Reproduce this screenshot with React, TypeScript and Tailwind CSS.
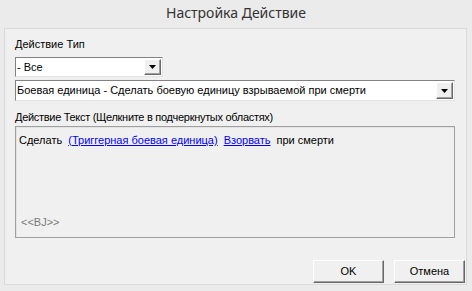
import React from "react";

function Arrow() {
  return (
    <svg width="7" height="4" viewBox="0 0 7 4">
      <path d="M0 0H7L3.5 4Z" fill="#000" />
    </svg>
  );
}

function Combo({ text, className }: { text: string; className: string }) {
  return (
    <div
      className={`flex bg-white border border-t-[#828282] border-l-[#828282] border-r-[#e3e3e3] border-b-[#e3e3e3] ${className}`}
    >
      <div className="flex-1 flex items-center pl-[1px] text-[11px] leading-none text-black overflow-hidden whitespace-nowrap">
        {text}
      </div>
      <div className="w-[17px] m-[1px] flex items-center justify-center bg-[#f0f0f0] border border-t-white border-l-white border-r-[#696969] border-b-[#696969] shadow-[inset_-1px_-1px_0_#a0a0a0]">
        <Arrow />
      </div>
    </div>
  );
}

function Btn({ label }: { label: string }) {
  return (
    <div className="w-[71px] h-[23px] flex items-center justify-center bg-[#f0f0f0] border border-t-white border-l-white border-r-[#696969] border-b-[#696969] shadow-[inset_-1px_-1px_0_#a0a0a0] text-[11px] text-black">
      {label}
    </div>
  );
}

export default function App() {
  return (
    <div
      className="w-[472px] h-[291px] bg-[#ebebeb] flex flex-col"
      style={{ fontFamily: '"Liberation Sans", Arial, sans-serif' }}
    >
      <div
        className="h-[28px] flex items-center justify-center text-[14px] text-[#333] pb-[3px]"
        style={{ fontFamily: '"Noto Sans", "Open Sans", sans-serif' }}
      >
        Настройка Действие
      </div>
      <div className="ml-[4px] w-[463px] h-[257px] bg-[#f0f0f0] border border-[#dadada] flex flex-col pl-[10px] text-[11px] text-black">
        <div className="mt-[9px] h-[13px] leading-[13px]">Действие Тип</div>
        <Combo text="- Все" className="mt-[6px] w-[148px] h-[20px]" />
        <Combo
          text="Боевая единица - Сделать боевую единицу взрываемой при смерти"
          className="mt-[3px] w-[440px] h-[21px]"
        />
        <div className="mt-[10px] h-[13px] leading-[13px] tracking-[-0.3px]">
          Действие Текст (Щелкните в подчеркнутых областях)
        </div>
        <div className="mt-[2px] w-[440px] h-[112px] border border-[#a0a0a0] shadow-[inset_1px_1px_0_#e3e3e3] flex flex-col pl-[3px] pt-[7px]">
          <div className="h-[13px] leading-[13px] whitespace-nowrap">
            Сделать{" "}
            <span className="ml-[3px] text-[#0000ff] underline">(Триггерная боевая единица)</span>
            <span className="ml-[6px] text-[#0000ff] underline">Взорвать</span>
            <span className="ml-[6px]">при смерти</span>
          </div>
          <div className="mt-auto mb-[8px] ml-[2px] text-[#7a7a7a] leading-[13px]">&lt;&lt;BJ&gt;&gt;</div>
        </div>
        <div className="mt-auto mb-[1px] flex justify-end gap-[10px] pr-[1px]">
          <Btn label="OK" />
          <Btn label="Отмена" />
        </div>
      </div>
    </div>
  );
}
